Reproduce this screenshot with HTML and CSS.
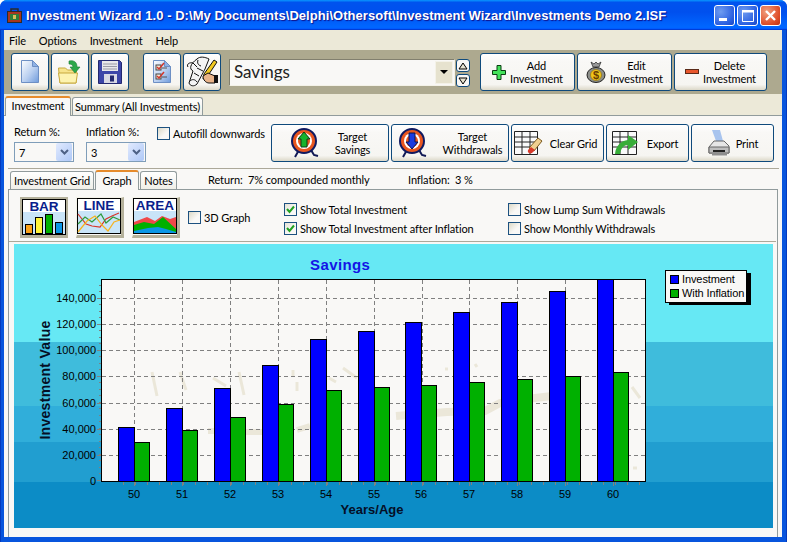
FILE: index.html
```html
<!DOCTYPE html>
<html lang="en">
<head>
<meta charset="utf-8">
<title>Investment Wizard</title>
<link rel="stylesheet" href="styles.css">
</head>
<body>
<div class="window">
  <header class="titlebar">
    <svg class="app-icon" width="17" height="17" viewBox="0 0 17 17"><rect x="1.5" y="4.5" width="14" height="11" fill="#a8361f" stroke="#2b2b2b"/><path d="M5 4.5V2h7v2.500" fill="none" stroke="#2b2b2b" stroke-width="1.500"/><rect x="4" y="7" width="9" height="6" fill="#2e7d3a"/><rect x="7" y="8" width="3" height="4" fill="#d8c05a"/></svg>
    <span class="title-text">Investment Wizard 1.0 - D:\My Documents\Delphi\Othersoft\Investment Wizard\Investments Demo 2.ISF</span>
    <div class="win-buttons">
      <span class="win-btn"><svg width="19" height="19" viewBox="0 0 19 19"><rect x="4" y="12" width="8" height="3" fill="#fff"/></svg></span>
      <span class="win-btn"><svg width="19" height="19" viewBox="0 0 19 19"><path d="M4.500 5.500h11v10h-11z" fill="none" stroke="#fff"/><rect x="4" y="4" width="12" height="2.500" fill="#fff"/></svg></span>
      <span class="win-btn win-close"><svg width="19" height="19" viewBox="0 0 19 19"><path d="M5 5l9 9M14 5l-9 9" stroke="#fff" stroke-width="2.400"/></svg></span>
    </div>
  </header>
  <div class="client">
    <nav class="menu"><span>File</span><span>Options</span><span>Investment</span><span>Help</span></nav>
    <div class="toolbar">
      <button class="btn icon-btn"><svg width="24" height="26" viewBox="0 0 24 26"><defs><linearGradient id="pg" x1="0" y1="0" x2="1" y2="1"><stop offset="0" stop-color="#fdfeff"/><stop offset=".55" stop-color="#b9cff0"/><stop offset="1" stop-color="#6f9bdc"/></linearGradient></defs><path d="M3.500 1.500h11l6 6v16h-17z" fill="url(#pg)" stroke="#6d8fc4"/><path d="M14.500 1.500v6h6z" fill="#8fb2e6" stroke="#6d8fc4"/></svg></button>
      <button class="btn icon-btn"><svg width="26" height="28" viewBox="0 0 26 28"><path d="M1.500 10h7l2 2h9l-.5 13H3z" fill="#f7e48c" stroke="#c7a93e"/><path d="M3 25l-1.500-10h19L19 25z" fill="#fdf3b0" stroke="#c7a93e"/><path d="M12 3c5-1 8 1 8 6h3l-5 6-5-6h3c0-2-2-3-4-3z" fill="#2da84a" stroke="#1c7a35" stroke-width=".6"/></svg></button>
      <button class="btn icon-btn"><svg width="26" height="26" viewBox="0 0 26 26"><path d="M1.500 1.500h21l2 2v21h-23z" fill="#3c45a8" stroke="#23286f"/><rect x="5" y="2" width="16" height="10" fill="#e8e8ea"/><path d="M6 5h14M6 7.500h14M6 10h14" stroke="#9a9aa6"/><rect x="7" y="15" width="13" height="9" fill="#d8d8e4"/><rect x="13" y="16.500" width="4" height="6" fill="#23286f"/></svg></button>
      <button class="btn icon-btn tool-gap"><svg width="24" height="26" viewBox="0 0 24 26"><path d="M3.500 1.500h11l6 6v16h-17z" fill="url(#pg)" stroke="#6d8fc4"/><path d="M14.500 1.500v6h6z" fill="#8fb2e6" stroke="#6d8fc4"/><rect x="6" y="6" width="5" height="5" fill="#f4ecdc" stroke="#444"/><rect x="6" y="15" width="5" height="5" fill="#f4ecdc" stroke="#444"/><path d="M7 8l2 2 5-6M7 17l2 2 5-6" fill="none" stroke="#d3352a" stroke-width="1.500"/><path d="M12 9h5M12 18h5" stroke="#555"/></svg></button>
      <button class="btn icon-btn"><svg width="34" height="34" viewBox="0 0 34 34"><path d="M12 4C15 1 20 2 24 4L20 14 12 29C9 32 5 31 4 28L8 16C4 14 5 9 12 4z" fill="#f4f4f4" stroke="#111"/><path d="M3 12C1 9 5 7 8 8l4 4M13 5c-1 3 0 5 3 6M5 26c2-2 5-2 7 1M9 18l5 3M12 13l6 3" fill="none" stroke="#111"/><path d="M19 19L29 5l3 2-10 15-4 2z" fill="#f2c91f" stroke="#111"/><path d="M18 21l5-3 7 3v7h-6c-3 0-6-3-6-7z" fill="#e9b48a" stroke="#111"/><rect x="29" y="20" width="4" height="8" fill="#111"/></svg></button>
      <div class="combo"><span class="combo-value">Savings</span><span class="combo-arrow"><i class="tri-down"></i></span></div>
      <div class="spinner">
        <span class="spin-btn"><svg width="10" height="8" viewBox="0 0 10 8"><path d="M5 1l4 6H1z" fill="#e8e4d2" stroke="#000"/></svg></span>
        <span class="spin-btn"><svg width="10" height="8" viewBox="0 0 10 8"><path d="M5 7l4-6H1z" fill="#e8e4d2" stroke="#000"/></svg></span>
      </div>
      <button class="btn act-btn act-add"><svg width="14" height="15" viewBox="0 0 14 15"><path d="M5 .5h4v5h4.500v4H9v5H5v-5H.5v-4H5z" fill="#44e25a" stroke="#0a3d12"/></svg><span class="label">Add<br>Investment</span></button>
      <button class="btn act-btn"><svg width="20" height="22" viewBox="0 0 20 22"><path d="M5 1l3 2 2-2 2 2 3-2-2 5h-6z" fill="#999" stroke="#222" stroke-width=".7"/><ellipse cx="10" cy="14" rx="9" ry="7.500" fill="#8d8f8a" stroke="#222"/><circle cx="10" cy="14" r="5.500" fill="#f0c41a" stroke="#8a6b0a" stroke-width=".6"/><text x="10" y="18" class="dollar">$</text></svg><span class="label">Edit<br>Investment</span></button>
      <button class="btn act-btn act-del"><svg width="14" height="6" viewBox="0 0 14 6"><rect x=".5" y=".5" width="13" height="4" fill="#e8562c" stroke="#5a2a18"/></svg><span class="label">Delete<br>Investment</span></button>
    </div>
    <div class="tabs">
      <span class="tab tab-active tab-inv">Investment</span>
      <span class="tab tab-sum">Summary (All Investments)</span>
    </div>
    <main class="panel">
      <section class="form-row">
        <div class="field"><label class="field-label">Return %:</label><div class="select"><span>7</span><i class="select-btn"><svg width="9" height="6" viewBox="0 0 9 6"><path d="M1 1l3.500 3.500L8 1" fill="none" stroke="#4d6185" stroke-width="2"/></svg></i></div></div>
        <div class="field"><label class="field-label">Inflation %:</label><div class="select"><span>3</span><i class="select-btn"><svg width="9" height="6" viewBox="0 0 9 6"><path d="M1 1l3.500 3.500L8 1" fill="none" stroke="#4d6185" stroke-width="2"/></svg></i></div></div>
        <div class="check check-auto"><i class="box"></i><span>Autofill downwards</span></div>
        <div class="form-actions">
          <button class="btn act-btn wide gap15"><svg width="30" height="30" viewBox="0 0 30 30"><path d="M9 22l-4 7M21 22l3 5 4 1" fill="none" stroke="#111a55" stroke-width="2"/><circle cx="14" cy="13" r="12" fill="#e8561f" stroke="#101a60" stroke-width="2"/><circle cx="14" cy="13" r="8" fill="#fff"/><circle cx="14" cy="13" r="6" fill="#e8561f"/><path d="M14 4l6 7h-3v8h-6v-8H8z" fill="#16b32c" stroke="#0b3d14"/></svg><span class="label">Target<br>Savings</span></button>
          <button class="btn act-btn wide gap15"><svg width="30" height="30" viewBox="0 0 30 30"><path d="M9 22l-4 7M21 22l3 5 4 1" fill="none" stroke="#111a55" stroke-width="2"/><circle cx="14" cy="13" r="12" fill="#e8561f" stroke="#101a60" stroke-width="2"/><circle cx="14" cy="13" r="8" fill="#fff"/><circle cx="14" cy="13" r="6" fill="#e8561f"/><path d="M14 21l6-7h-3V5h-6v9H8z" fill="#1a3be0" stroke="#0b1450"/></svg><span class="label">Target<br>Withdrawals</span></button>
          <button class="btn act-btn clear-btn"><svg width="30" height="26" viewBox="0 0 30 26"><path d="M.5 1.500h23v23H.5zM.5 7h23M.5 12h23M.5 17h23M8 1.500v23M16 1.500v23" fill="#fafafa" stroke="#222"/><path d="M15 18l9-10 4 3-8 10z" fill="#f0d090" stroke="#7a5a20"/><path d="M14 20l3-3 4 3-3 3c-2 1-5 0-4-3z" fill="#d83a2a"/></svg><span class="label">Clear Grid</span></button>
          <button class="btn act-btn export-btn"><svg width="27" height="26" viewBox="0 0 27 26"><path d="M.5 1.500h24v23H.5zM.5 7h24M.5 12h24M.5 17h24M8 1.500v23M16 1.500v23" fill="#fafafa" stroke="#222"/><path d="M3 24c1-9 6-13 13-14V5l10 7-10 8v-5c-4 0-7 3-8 9z" fill="#38ad38"/></svg><span class="label">Export</span></button>
          <button class="btn act-btn print-btn"><svg width="24" height="28" viewBox="0 0 24 28"><path d="M5 1h8l3 11H9z" fill="#a8c4ee"/><path d="M2 18l5-6h10l5 5v7H2z" fill="#e6e6e6" stroke="#666"/><path d="M2 18h20v6H2z" fill="#bdbdbd" stroke="#666"/><rect x="6" y="21" width="12" height="2" fill="#222"/><rect x="5" y="24" width="15" height="2.500" fill="#8e8e8e"/></svg><span class="label">Print</span></button>
        </div>
      </section>
      <div class="inner-top">
        <span class="tab sub-tab">Investment Grid</span>
        <span class="tab tab-active sub-active">Graph</span>
        <span class="tab sub-tab">Notes</span>
        <span class="info info-return">Return:&nbsp; 7% compounded monthly</span>
        <span class="info info-inflation">Inflation:&nbsp; 3 %</span>
      </div>
      <section class="sub-panel">
        <div class="options">
          <div class="gbtn gbtn-on"><svg width="44" height="36" viewBox="0 0 44 36"><rect x=".5" y=".5" width="43" height="35" fill="#fff" stroke="#000"/><rect x="1" y="13" width="42" height="22" fill="#c9e4f8"/><text x="22" y="12" class="gtext">BAR</text><g stroke="#000"><rect x="3.500" y="25.500" width="7" height="9" fill="#f9a21a"/><rect x="13.500" y="18.500" width="7" height="16" fill="#fff23a"/><rect x="23.500" y="15.500" width="7" height="19" fill="#00b000"/><rect x="33.500" y="23.500" width="7" height="11" fill="#0a96e6"/></g></svg></div>
          <div class="gbtn"><svg width="44" height="36" viewBox="0 0 44 36"><rect x=".5" y=".5" width="43" height="35" fill="#fff" stroke="#000"/><rect x="1" y="13" width="42" height="22" fill="#c9e4f8"/><text x="22" y="12" class="gtext">LINE</text><g fill="none" stroke-width="1.200"><path d="M1 16l8 10 6 2 8 1 6-8 6-3 7-3" stroke="#d8362a"/><path d="M1 26l7-7 7 5 9-8 5 9 7-6 7 3" stroke="#2f9a3c"/><path d="M1 34l9-11 8-5 7 9 6 6 6-9 6-2" stroke="#f6b21e"/></g></svg></div>
          <div class="gbtn"><svg width="44" height="36" viewBox="0 0 44 36"><rect x=".5" y=".5" width="43" height="35" fill="#fff" stroke="#000"/><rect x="1" y="13" width="42" height="22" fill="#c9e4f8"/><text x="22" y="12" class="gtext">AREA</text><path d="M1 24l13-5 8 4 7-5 8 3 6-2v16H1z" fill="#f0484a"/><path d="M1 27l10-3 10 2 9-7 13 12v4H1z" fill="#00b000"/><path d="M1 33l14-3 10-1 8 2 10 3v1H1z" fill="#0a96e6"/></svg></div>
          <div class="check check-3d"><i class="box"></i><span>3D Graph</span></div>
          <div class="check-col col-total">
            <div class="check"><i class="box box-on"><svg width="11" height="11" viewBox="0 0 11 11"><path d="M2 5l2.500 3L9 2.500" fill="none" stroke="#21a121" stroke-width="2"/></svg></i><span>Show Total Investment</span></div>
            <div class="check"><i class="box box-on"><svg width="11" height="11" viewBox="0 0 11 11"><path d="M2 5l2.500 3L9 2.500" fill="none" stroke="#21a121" stroke-width="2"/></svg></i><span>Show Total Investment after Inflation</span></div>
          </div>
          <div class="check-col">
            <div class="check"><i class="box"></i><span>Show Lump Sum Withdrawals</span></div>
            <div class="check"><i class="box"></i><span>Show Monthly Withdrawals</span></div>
          </div>
        </div>
        <svg class="chart" width="759" height="284" viewBox="14 244 759 284">
          <rect x="14" y="244" width="759" height="98" fill="#66e8f4"/>
          <rect x="14" y="342" width="759" height="64" fill="#3fbcdc"/>
          <rect x="14" y="406" width="759" height="36" fill="#30aeda"/>
          <rect x="14" y="442" width="759" height="40" fill="#219ed0"/>
          <rect x="14" y="482" width="759" height="46" fill="#0c8cc6"/>
          <rect x="102" y="280" width="543" height="201" fill="#f9f8f6"/>
          <g fill="none" stroke="#ebe7d9">
            <path d="M396 416L447 412 485 411 500 403 535 398 552 396" stroke-width="8"/>
            <path d="M208 431h6M245 432h18M297 430l13-4" stroke-width="6"/>
            <path d="M343 368l14 10M329 378l7 4M632 387l8 11M152 372l5 24M180 372l6 18M213 378l13 8M239 372l5 23M293 370v6M297 382v9M445 369h3M466 348h2M475 364l2 3M633 468h4" stroke-width="3"/>
          </g>
          <g class="grid">
            <path d="M102 298.500H645M102 324.500H645M102 350.500H645M102 376.500H645M102 403.500H645M102 429.500H645M102 455.500H645"/>
            <path d="M134.500 280V481M182.500 280V481M230.500 280V481M278.500 280V481M326.500 280V481M374.500 280V481M422.500 280V481M469.500 280V481M517.500 280V481M565.500 280V481M613.500 280V481"/>
          </g>
          <g class="bars-blue">
            <rect x="118.500" y="427.500" width="16" height="53.500"/><rect x="166.500" y="408.500" width="16" height="72.500"/><rect x="214.500" y="388.500" width="16" height="92.500"/><rect x="262.500" y="365.500" width="16" height="115.500"/><rect x="310.500" y="339.500" width="16" height="141.500"/><rect x="358.500" y="331.500" width="16" height="149.500"/><rect x="405.500" y="322.500" width="16" height="158.500"/><rect x="453.500" y="312.500" width="16" height="168.500"/><rect x="501.500" y="302.500" width="16" height="178.500"/><rect x="549.500" y="291.500" width="16" height="189.500"/><rect x="597.500" y="279.500" width="16" height="201.500"/>
          </g>
          <g class="bars-green">
            <rect x="134.500" y="442.500" width="15" height="38.500"/><rect x="182.500" y="430.500" width="15" height="50.500"/><rect x="230.500" y="417.500" width="15" height="63.500"/><rect x="278.500" y="404.500" width="15" height="76.500"/><rect x="326.500" y="390.500" width="15" height="90.500"/><rect x="374.500" y="387.500" width="15" height="93.500"/><rect x="421.500" y="385.500" width="15" height="95.500"/><rect x="469.500" y="382.500" width="15" height="98.500"/><rect x="517.500" y="379.500" width="15" height="101.500"/><rect x="565.500" y="376.500" width="15" height="104.500"/><rect x="613.500" y="372.500" width="15" height="108.500"/>
          </g>
          <rect x="101.500" y="279.500" width="544" height="201.500" fill="none" stroke="#000" class="crisp"/>
          <path class="tick-major" d="M97 298.500h4M97 324.500h4M97 350.500h4M97 376.500h4M97 403.500h4M97 429.500h4M97 455.500h4M97 480.500h4M134.500 482v4M182.500 482v4M230.500 482v4M278.500 482v4M326.500 482v4M374.500 482v4M422.500 482v4M469.500 482v4M517.500 482v4M565.500 482v4M613.500 482v4"/>
          <path class="tick-minor-y" d="M100 480.500V280"/>
          <path class="tick-minor-x" d="M122.500 483H645"/>
          <text class="chart-title" x="310" y="270">Savings</text>
          <g class="y-labels">
            <text x="96" y="302">140,000</text><text x="96" y="328">120,000</text><text x="96" y="354">100,000</text><text x="96" y="380">80,000</text><text x="96" y="407">60,000</text><text x="96" y="433">40,000</text><text x="96" y="459">20,000</text><text x="96" y="485">0</text>
          </g>
          <g class="x-labels">
            <text x="134" y="498">50</text><text x="182" y="498">51</text><text x="230" y="498">52</text><text x="278" y="498">53</text><text x="326" y="498">54</text><text x="374" y="498">55</text><text x="421" y="498">56</text><text x="469" y="498">57</text><text x="517" y="498">58</text><text x="565" y="498">59</text><text x="613" y="498">60</text>
          </g>
          <text class="axis-title" x="372" y="514" text-anchor="middle">Years/Age</text>
          <text class="axis-title axis-y" transform="translate(50 380) rotate(-90)" text-anchor="middle">Investment Value</text>
          <rect x="669" y="273" width="82" height="32" fill="#000"/>
          <rect x="665.500" y="270.500" width="81" height="32" fill="#f9f8f6" stroke="#000"/>
          <rect x="670.500" y="275.500" width="8" height="8" fill="#0000ff" stroke="#000"/>
          <rect x="670.500" y="289.500" width="8" height="8" fill="#00b000" stroke="#000"/>
          <text class="legend-text" x="682" y="283">Investment</text>
          <text class="legend-text" x="682" y="297">With Inflation</text>
        </svg>
      </section>
    </main>
  </div>
</div>
</body>
</html>
```
FILE: styles.css
```css
* { box-sizing: border-box; }
html, body { margin: 0; padding: 0; background: #fff; }
body { width: 787px; height: 542px; overflow: hidden; font: 11px Lato, "Liberation Sans", sans-serif; letter-spacing: -.1px; color: #000; }

.window { width: 787px; height: 542px; display: flex; flex-direction: column; border-radius: 7px 7px 0 0; overflow: hidden; background: linear-gradient(90deg, #001ea0 0, #0855dd 1px, #0855dd 786px, #001ea0 787px); }

.titlebar { height: 30px; flex: none; display: flex; align-items: center; padding: 0 6px 0 6px; color: #fff; background: linear-gradient(180deg, #0997ff 0, #0053ee 8%, #0050ee 40%, #0066ff 88%, #0066ff 93%, #005bff 95%, #003dd7 96%, #003dd7 100%); }
.app-icon { flex: none; margin-right: 3px; }
.title-text { font: bold 13px "Liberation Sans", sans-serif; letter-spacing: .05px; white-space: nowrap; text-shadow: 1px 1px 1px #0f1089; }
.win-buttons { margin-left: auto; display: flex; gap: 2px; }
.win-btn { width: 21px; height: 21px; border: 1px solid #fff; border-radius: 3px; background: radial-gradient(circle at 30% 30%, #6f9cf0, #2a5fe0 70%, #1a45c0); display: block; }
.win-btn svg { display: block; }
.win-close { background: radial-gradient(circle at 30% 30%, #f0a080, #e0502a 65%, #c03010); }

.client { flex: 1; margin: 0 5px 5px 4px; background: #ece9d8; display: flex; flex-direction: column; min-height: 0; }

.menu { height: 20px; flex: none; display: flex; align-items: center; gap: 13px; padding-left: 5px; }

.toolbar { height: 44px; flex: none; display: flex; align-items: center; padding-left: 7px; background: #ada98f; }
.btn { display: flex; align-items: center; justify-content: center; padding: 0; height: 38px; border: 1px solid #0f4a7c; border-radius: 3px; background: linear-gradient(180deg, #fff 0, #f9f8f6 20%, #f6f5f1 85%, #dcd8c8 100%); font: inherit; letter-spacing: inherit; color: #000; }
.icon-btn { width: 38px; margin-right: 2px; }
.tool-gap { margin-left: 12px; }
.combo { width: 226px; height: 27px; margin-left: 6px; display: flex; align-items: center; justify-content: space-between; padding: 0 1px 0 4px; background: #f9f8f6; border: 1px solid; border-color: #817f6e #f4f2e8 #f4f2e8 #817f6e; }
.combo-value { font-size: 17px; letter-spacing: 0; color: #222; margin-bottom: 2px; }
.combo-arrow { width: 18px; height: 23px; display: flex; align-items: center; justify-content: center; background: #e6e2ce; border: 1px solid #f4f2e8; }
.tri-down { width: 0; height: 0; border: 4px solid transparent; border-top: 4px solid #000; border-bottom: 0; }
.spinner { display: flex; flex-direction: column; gap: 2px; margin: 2px 10px 0 1px; }
.spin-btn { width: 14px; height: 13px; display: flex; align-items: center; justify-content: center; background: #f9f8f6; border: 1px solid #0f4a7c; border-radius: 3px; }
.act-btn { width: 95px; margin-right: 2px; gap: 4px; line-height: 13px; text-align: center; }
.act-btn svg { flex: none; }
.act-del { width: 93px; margin-right: 0; }

.tabs { height: 21px; flex: none; display: flex; align-items: flex-end; padding-left: 1px; }
.tab { display: flex; align-items: center; justify-content: center; height: 18px; padding: 0 3px; margin-right: 1px; border: 1px solid #919b9c; border-bottom: 0; border-radius: 3px 3px 0 0; background: linear-gradient(180deg, #fff, #f0efe8); white-space: nowrap; }
.tab-active { background: #f9f8f6; border-top: 2px solid #e68b2c; border-color: #e68b2c #919b9c transparent; }
.tab-inv { width: 66px; height: 20px; position: relative; top: 1px; padding-bottom: 3px; }
.tab-sum { width: 131px; }

.panel { flex: 1; min-height: 0; background: #f9f8f6; border-top: 1px solid #919b9c; display: flex; flex-direction: column; }

.form-row { height: 53px; flex: none; display: flex; align-items: flex-start; margin: 0 3px 0 4px; padding: 8px 5px 0 6px; border-bottom: 1px solid #aca899; }
.field { width: 60px; margin-right: 12px; margin-top: 1px; }
.field-label { display: block; height: 17px; line-height: 14px; }
.select { height: 20px; display: flex; align-items: center; justify-content: space-between; padding: 1px 1px 1px 4px; border: 1px solid #7f9db9; background: #f9f8f6; }
.select-btn { width: 16px; height: 18px; display: flex; align-items: center; justify-content: center; background: linear-gradient(135deg, #e1eafe, #aec8f7); border-radius: 2px; }
.check { display: flex; align-items: center; gap: 3px; height: 13px; white-space: nowrap; }
.box { width: 13px; height: 13px; flex: none; display: flex; align-items: center; justify-content: center; border: 1px solid #1c5180; background: linear-gradient(135deg, #dcd9c7, #f9f8f6 60%); }
.box-on { background: linear-gradient(135deg, #e4e2d4, #f9f8f6 60%); }
.check-auto { margin-top: 3px; margin-left: -1px; }
.form-actions { margin-left: auto; display: flex; gap: 2px; }
.form-actions .act-btn { margin-right: 0; }
.wide { width: 118px; }
.gap15 { gap: 15px; }
.clear-btn { width: 93px; gap: 6px; padding-right: 4px; }
.export-btn { width: 83px; gap: 8px; padding-right: 5px; }
.print-btn { width: 83px; gap: 5px; }

.inner-top { height: 20px; flex: none; display: flex; align-items: flex-end; padding-left: 6px; }
.sub-tab { height: 18px; background: linear-gradient(180deg, #fff, #f0efe8); }
.sub-tab:first-child { width: 84px; }
.sub-tab:nth-child(3) { width: 37px; }
.sub-active { width: 44px; height: 20px; position: relative; top: 1px; z-index: 1; padding-bottom: 2px; }
.info { align-self: center; white-space: nowrap; }
.info-return { margin-left: 30px; width: 200px; }

.sub-panel { margin: 0 4px 0 4px; flex: 1; min-height: 0; border: 1px solid #919b9c; border-bottom: 0; display: flex; flex-direction: column; }
.options { height: 52px; flex: none; display: flex; padding: 7px 0 0 11px; margin-right: 1px; border-bottom: 1px solid #aca899; }
.gbtn { width: 48px; height: 41px; margin-right: 8px; border-style: solid; border-color: #f4f2e8 #b5b19b #b5b19b #f4f2e8; border-width: 1px 3px 3px 1px; flex: none; }
.gbtn svg { display: block; }
.gbtn-on { border-color: #b5b19b; border-width: 2px 2px 3px 2px; }
.gtext { font: bold 13.5px "Liberation Sans", sans-serif; letter-spacing: 0; fill: #0a1e8c; text-anchor: middle; }
.dollar { font: bold 11px "Liberation Sans", sans-serif; fill: #6a3d00; text-anchor: middle; }
.check-3d { width: 96px; margin: 14px 0 0 0; }
.check-col { display: flex; flex-direction: column; gap: 6px; margin-top: 6px; }
.col-total { width: 224px; }

.chart { display: block; margin: 2px 0 0 5px; flex: none; font-family: "Liberation Sans", sans-serif; letter-spacing: 0; }
.grid path { fill: none; stroke: #808080; stroke-dasharray: 4 3; shape-rendering: crispEdges; }
.bars-blue rect { fill: #0000ff; stroke: #000; shape-rendering: crispEdges; }
.bars-green rect { fill: #00b000; stroke: #000; shape-rendering: crispEdges; }
.crisp { shape-rendering: crispEdges; }
.tick-major { stroke: #808080; fill: none; shape-rendering: crispEdges; }
.tick-minor-y { stroke: #808080; stroke-width: 2; stroke-dasharray: 1 5.5; fill: none; shape-rendering: crispEdges; }
.tick-minor-x { stroke: #808080; stroke-width: 3; stroke-dasharray: 1 11; fill: none; shape-rendering: crispEdges; }
.chart-title { font-size: 15px; font-weight: bold; fill: #1414e6; letter-spacing: .4px; }
.y-labels text { font-size: 11px; text-anchor: end; }
.x-labels text { font-size: 11px; text-anchor: middle; }
.axis-title { font-size: 13px; font-weight: bold; fill: #050f26; }
.axis-y { font-size: 14px; letter-spacing: .3px; }
.legend-text { font-size: 11px; letter-spacing: -.1px; }
```
